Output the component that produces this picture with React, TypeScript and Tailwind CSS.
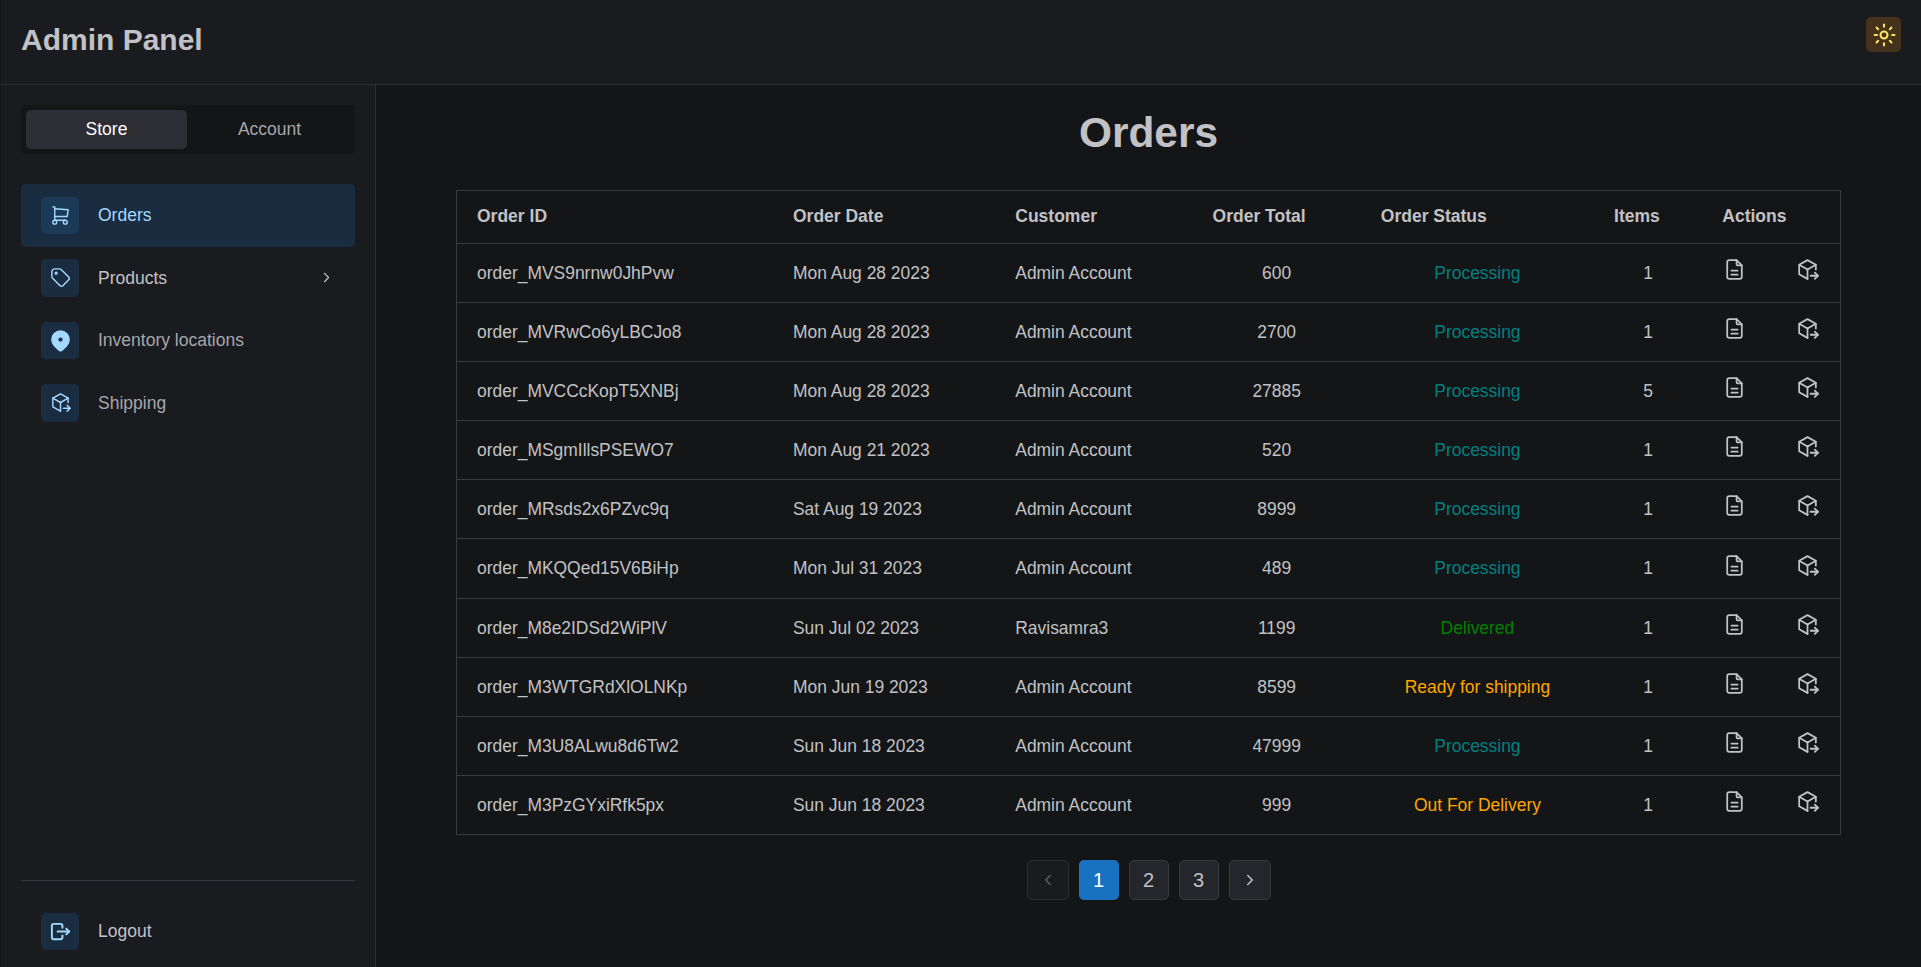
import { TbBrightnessUp, TbChevronLeft, TbChevronRight, TbFileDescription, TbLogout, TbMapPinFilled, TbPackageExport, TbShoppingCart, TbTag } from 'react-icons/tb'

const orders = [
  { id: 'order_MVS9nrnw0JhPvw', date: 'Mon Aug 28 2023', customer: 'Admin Account', total: 600, status: 'Processing', items: 1 },
  { id: 'order_MVRwCo6yLBCJo8', date: 'Mon Aug 28 2023', customer: 'Admin Account', total: 2700, status: 'Processing', items: 1 },
  { id: 'order_MVCCcKopT5XNBj', date: 'Mon Aug 28 2023', customer: 'Admin Account', total: 27885, status: 'Processing', items: 5 },
  { id: 'order_MSgmIllsPSEWO7', date: 'Mon Aug 21 2023', customer: 'Admin Account', total: 520, status: 'Processing', items: 1 },
  { id: 'order_MRsds2x6PZvc9q', date: 'Sat Aug 19 2023', customer: 'Admin Account', total: 8999, status: 'Processing', items: 1 },
  { id: 'order_MKQQed15V6BiHp', date: 'Mon Jul 31 2023', customer: 'Admin Account', total: 489, status: 'Processing', items: 1 },
  { id: 'order_M8e2IDSd2WiPlV', date: 'Sun Jul 02 2023', customer: 'Ravisamra3', total: 1199, status: 'Delivered', items: 1 },
  { id: 'order_M3WTGRdXlOLNKp', date: 'Mon Jun 19 2023', customer: 'Admin Account', total: 8599, status: 'Ready for shipping', items: 1 },
  { id: 'order_M3U8ALwu8d6Tw2', date: 'Sun Jun 18 2023', customer: 'Admin Account', total: 47999, status: 'Processing', items: 1 },
  { id: 'order_M3PzGYxiRfk5px', date: 'Sun Jun 18 2023', customer: 'Admin Account', total: 999, status: 'Out For Delivery', items: 1 },
]

const statusColor: Record<string, string> = {
  Processing: 'text-[#008080]',
  Delivered: 'text-[#008000]',
  'Ready for shipping': 'text-[#ffa500]',
  'Out For Delivery': 'text-[#ffa500]',
}

const navItems = [
  { label: 'Orders', icon: TbShoppingCart, color: 'bg-[#1a2d40] text-[#a5d8ff]', active: true },
  { label: 'Products', icon: TbTag, color: 'text-[#c1c2c5]', chevron: true },
  { label: 'Inventory locations', icon: TbMapPinFilled, color: 'text-[#a6a7ab]' },
  { label: 'Shipping', icon: TbPackageExport, color: 'text-[#a6a7ab]' },
]

function NavIcon({ icon: Icon, active, stroke = 1.5 }: { icon: typeof TbTag; active?: boolean; stroke?: number }) {
  return (
    <span className={`flex h-[37.5px] w-[38px] items-center justify-center rounded-[5px] text-[#a5d8ff] ${active ? 'bg-[#1a3a58]' : 'bg-[#1a2d40]'}`}>
      <Icon size={23} strokeWidth={stroke} />
    </span>
  )
}

export default function App() {
  return (
    <div className="flex h-[967px] flex-col overflow-hidden bg-[#141517] font-['Liberation_Sans',sans-serif] text-[17.5px] text-[#c1c2c5]">
      {/* Header */}
      <header className="flex h-[85px] shrink-0 items-start justify-between border-b border-l border-[#2c2e33] border-l-[#141517] bg-[#1a1b1e] pl-[20px] pr-[20px]">
        <h1 className="mt-[21px] text-[30px] leading-[38px] font-bold">Admin Panel</h1>
        <button className="mt-[17px] flex h-[35px] w-[35px] items-center justify-center rounded-[5px] bg-[#45321a] text-[#ffe066]">
          <TbBrightnessUp size={28} strokeWidth={1.75} />
        </button>
      </header>

      <div className="flex min-h-0 flex-1">
        {/* Sidebar */}
        <aside className="flex w-[376px] shrink-0 flex-col border-r border-l border-[#2c2e33] border-l-[#141517] bg-[#1a1b1e] px-[20px] pt-[20px] pb-[17px]">
          <div className="flex h-[49px] rounded-[5px] bg-[#141517] p-[5px]">
            <div className="flex w-[161px] items-center justify-center rounded-[5px] bg-[#2c2e33] text-white">Store</div>
            <div className="flex flex-1 items-center justify-center pl-[2px] text-[#a6a7ab]">Account</div>
          </div>

          <nav className="mt-[30px] flex flex-col">
            {navItems.map((item) => (
              <div key={item.label} className={`flex h-[62.5px] items-center gap-[19px] rounded-[5px] px-[20px] ${item.color}`}>
                <NavIcon icon={item.icon} active={item.active} />
                <span className="flex-1">{item.label}</span>
                {item.chevron && <TbChevronRight size={17} strokeWidth={1.5} />}
              </div>
            ))}
          </nav>

          <div className="mt-auto border-t border-[#373a40] pt-[32px]">
            <div className="flex items-center gap-[19px] px-[20px] text-[#c1c2c5]">
              <NavIcon icon={TbLogout} stroke={2} />
              <span>Logout</span>
            </div>
          </div>
        </aside>

        {/* Main */}
        <main className="flex min-w-0 flex-1 flex-col">
          <h2 className="mt-[22px] text-center text-[42.4px] leading-[52px] font-bold">Orders</h2>

          <table className="mx-[80px] mt-[31px] table-fixed border-collapse border border-[#373a40]">
            <colgroup>
              <col className="w-[316px]" />
              <col className="w-[222px]" />
              <col className="w-[197px]" />
              <col className="w-[168px]" />
              <col className="w-[233px]" />
              <col className="w-[108px]" />
              <col className="w-[138px]" />
            </colgroup>
            <thead>
              <tr className="h-[53px] border-b border-[#373a40] text-left text-[17.5px] font-bold">
                <th className="px-[20px] pb-[2px]">Order ID</th>
                <th className="px-[20px] pb-[2px]">Order Date</th>
                <th className="px-[20px] pb-[2px]">Customer</th>
                <th className="px-[20px] pb-[2px]">Order Total</th>
                <th className="px-[20px] pb-[2px]">Order Status</th>
                <th className="px-[20px] pb-[2px]">Items</th>
                <th className="px-[20px] pb-[2px]">Actions</th>
              </tr>
            </thead>
            <tbody>
              {orders.map((o) => (
                <tr key={o.id} className="h-[59.1px] border-b border-[#373a40] text-[17.45px] last:border-0">
                  <td className="px-[20px]">{o.id}</td>
                  <td className="px-[20px]">{o.date}</td>
                  <td className="px-[20px]">{o.customer}</td>
                  <td className="px-[20px] text-center">{o.total}</td>
                  <td className={`px-[20px] text-center ${statusColor[o.status]}`}>{o.status}</td>
                  <td className="px-[20px] text-center">{o.items}</td>
                  <td className="px-[20px]">
                    <div className="-mt-[7px] flex items-center justify-between">
                      <TbFileDescription size={25} strokeWidth={1.7} />
                      <TbPackageExport size={25} strokeWidth={1.7} />
                    </div>
                  </td>
                </tr>
              ))}
            </tbody>
          </table>

          {/* Pagination */}
          <div className="mt-[25px] flex justify-center gap-[10px] text-[20px]">
            <button className="flex h-[40px] w-[42px] items-center justify-center rounded-[5px] border border-[#2c2e33] bg-[#1a1b1e] text-[#5c5f66]">
              <TbChevronLeft size={18} strokeWidth={2} />
            </button>
            <button className="flex h-[40px] w-[40px] items-center justify-center rounded-[5px] bg-[#1971c2] text-white">1</button>
            <button className="flex h-[40px] w-[40px] items-center justify-center rounded-[5px] border border-[#373a40] bg-[#25262b]">2</button>
            <button className="flex h-[40px] w-[40px] items-center justify-center rounded-[5px] border border-[#373a40] bg-[#25262b]">3</button>
            <button className="flex h-[40px] w-[42px] items-center justify-center rounded-[5px] border border-[#373a40] bg-[#25262b]">
              <TbChevronRight size={18} strokeWidth={2} />
            </button>
          </div>
        </main>
      </div>
    </div>
  )
}
